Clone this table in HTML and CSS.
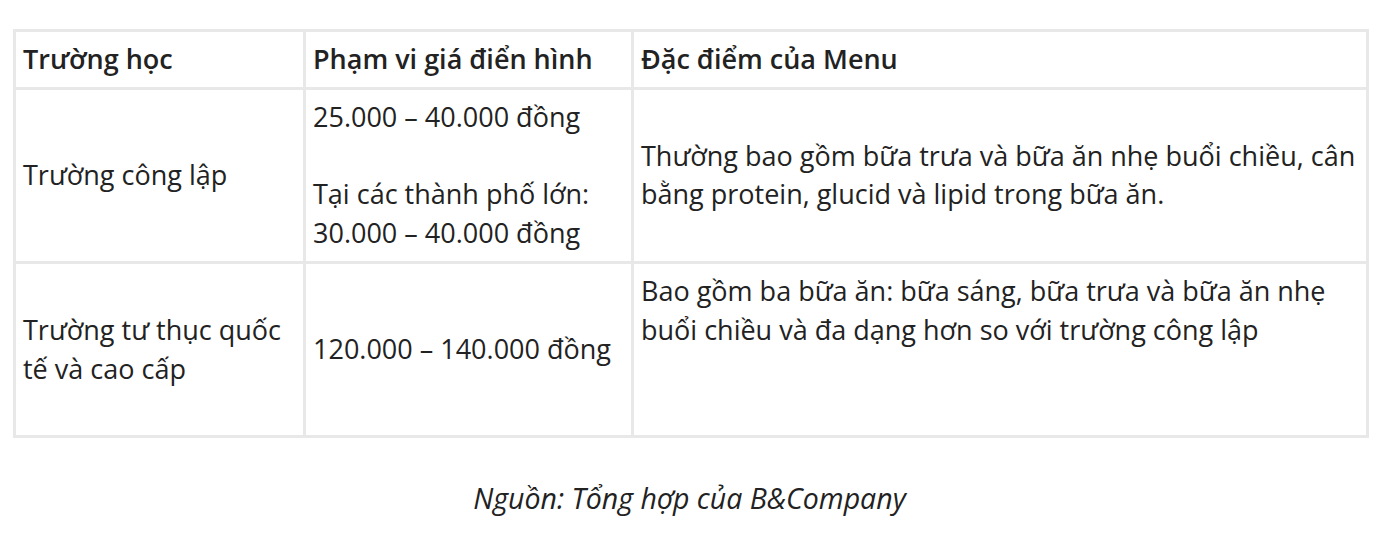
FILE: index.html
```html
<!DOCTYPE html>
<html lang="vi">
<head>
<meta charset="utf-8">
<link rel="stylesheet" href="styles.css">
</head>
<body>
<div class="wrap">
  <table class="menu-table">
    <colgroup>
      <col class="c1"><col class="c2"><col class="c3">
    </colgroup>
    <thead>
      <tr>
        <th>Trường học</th>
        <th>Phạm vi giá điển hình</th>
        <th>Đặc điểm của Menu</th>
      </tr>
    </thead>
    <tbody>
      <tr>
        <td>Trường công lập</td>
        <td>25.000 – 40.000 đồng<br><br>Tại các thành phố lớn:<br>30.000 – 40.000 đồng</td>
        <td>Thường bao gồm bữa trưa và bữa ăn nhẹ buổi chiều, cân bằng protein, glucid và lipid trong bữa ăn.</td>
      </tr>
      <tr>
        <td>Trường tư thục quốc tế và cao cấp</td>
        <td>120.000 – 140.000 đồng</td>
        <td>Bao gồm ba bữa ăn: bữa sáng, bữa trưa và bữa ăn nhẹ buổi chiều và đa dạng hơn so với trường công lập<br><br><br></td>
      </tr>
    </tbody>
  </table>
  <p class="caption">Nguồn: Tổng hợp của B&amp;Company</p>
</div>
</body>
</html>
```
FILE: styles.css
```css
html, body {
  margin: 0;
  padding: 0;
  background: #ffffff;
}
body {
  font-family: "Open Sans", "Noto Sans", sans-serif;
  color: #222222;
  font-size: 27px;
  line-height: 38.8px;
}
.wrap {
  padding: 29px 24px 0 13px;
}
.menu-table {
  width: 1353px;
  border-collapse: collapse;
  table-layout: fixed;
}
.c1 { width: 290px; }
.c2 { width: 328px; }
.c3 { width: 735px; }
.menu-table th,
.menu-table td {
  border: 3px solid #e8e8e8;
  padding: 8px 7px;
  text-align: left;
  vertical-align: middle;
}
.menu-table th {
  font-weight: 600;
}
.caption {
  margin: 41px 0 0 0;
  text-align: center;
  width: 1353px;
  font-size: 28.5px;
  font-style: italic;
}
```
